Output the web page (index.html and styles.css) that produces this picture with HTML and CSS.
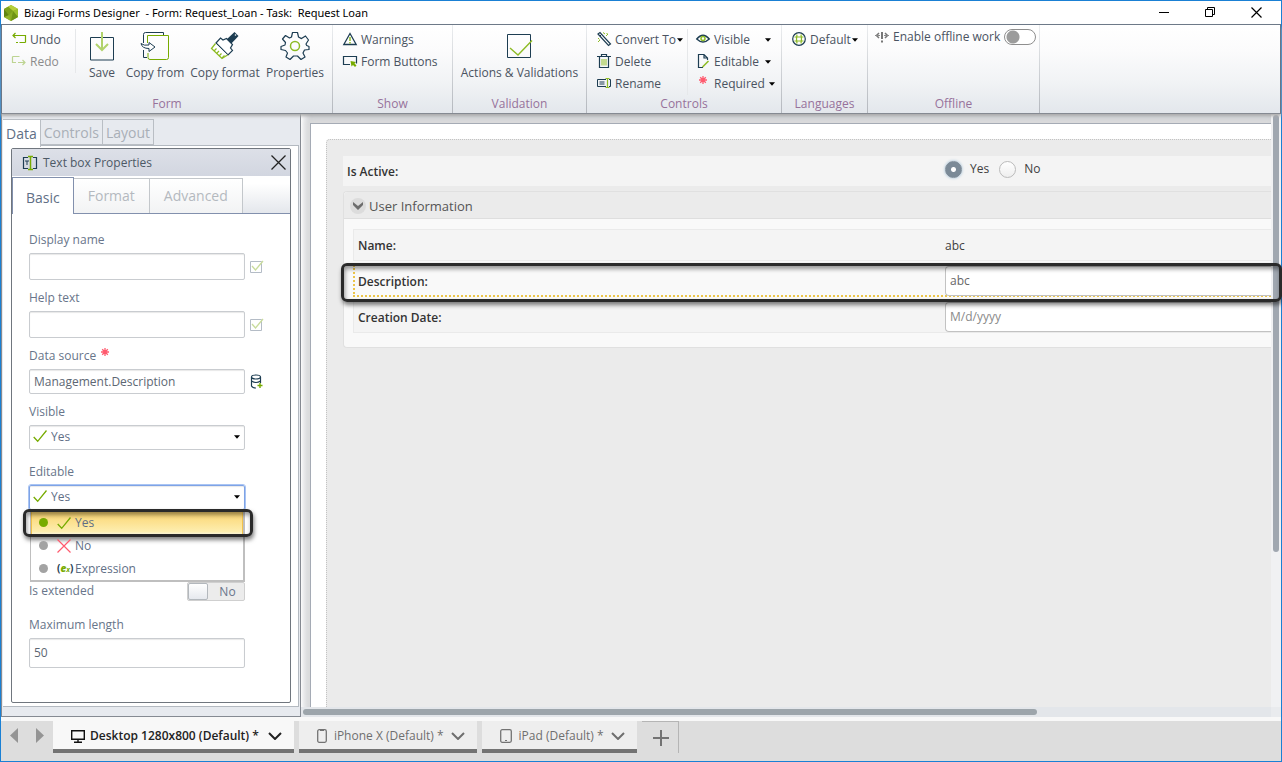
FILE: index.html
```html
<!DOCTYPE html>
<html lang="en">
<head>
<meta charset="utf-8">
<title>Bizagi Forms Designer</title>
<link rel="stylesheet" href="styles.css">
</head>
<body>
<svg class="defs" width="0" height="0" aria-hidden="true">
  <symbol id="check" viewBox="0 0 14 14"><path d="M.7 8l4 4.300L13.500 1.500" fill="none" stroke="#77ab00" stroke-width="1.300"/></symbol>
  <symbol id="caret" viewBox="0 0 7 4"><path d="M0 0h7L3.500 4z" fill="#000"/></symbol>
  <symbol id="chev" viewBox="0 0 14 8"><path d="M1 1l6 6 6-6" fill="none" stroke="currentColor" stroke-width="2"/></symbol>
  <symbol id="star" viewBox="0 0 8 8"><path d="M4 0v8M0 4h8M1.200 1.200l5.600 5.600M6.800 1.200L1.200 6.800" stroke="#ff5a6e" stroke-width="1.300"/></symbol>
  <symbol id="boxcheck" viewBox="0 0 14 13"><path d="M.5 1.500h11v11H.5z" fill="#fff" stroke="#b4bcc6"/><path d="M2 6l3.500 4L13 1" fill="none" stroke="#c9dc9c" stroke-width="1.300"/></symbol>
</svg>
<div class="window">
  <header class="titlebar">
    <svg class="logo" width="16" height="16" viewBox="0 0 16 16"><path d="M8 0l7 4v8l-7 4-7-4V4z" fill="#8aae22"/><path d="M8 0l7 4-5 2-5-4.300z" fill="#b6cf3a"/><path d="M15 4v8l-5-6z" fill="#9cbf2b"/><path d="M15 12l-7 4 2-10z" fill="#6f9414"/><path d="M8 16l-7-4 5-2z" fill="#93b52b"/><path d="M1 12V4l5 6z" fill="#5f8412"/><path d="M1 4l4-2.300L10 6l-4 4z" fill="#7da11b"/></svg>
    <h1 class="title">Bizagi Forms Designer&nbsp; - Form: Request_Loan - Task:&nbsp; Request Loan</h1>
    <div class="wincontrols">
      <button aria-label="Minimize"><svg width="11" height="11"><path d="M0 5.500h10" stroke="#000"/></svg></button>
      <button aria-label="Restore"><svg width="11" height="11"><path d="M.5 2.500h7v7h-7zM2.500 2.500v-2h7v7h-2" fill="none" stroke="#000"/></svg></button>
      <button aria-label="Close"><svg width="11" height="11"><path d="M.5.5l10 10M10.500.5l-10 10" stroke="#000" stroke-width="1.200"/></svg></button>
    </div>
  </header>

  <nav class="ribbon">
    <section class="group g-form">
      <div class="tools">
        <div class="smallcol divided">
          <button class="small"><svg width="14" height="14"><path d="M3.500 1L1 3.500 3.500 6M1 3.500h12.500v7" fill="none" stroke="#77ab00" stroke-width="1.200"/><path d="M4 10.500h2M7.500 10.500h6" stroke="#77ab00"/></svg>Undo</button>
          <button class="small off"><svg width="14" height="14"><path d="M10.500 6L13 8.500 10.500 11M13 8.500H6M.5 9V2.500M1 8.500h3M.5 2.500h7" fill="none" stroke="#bdd492" stroke-width="1.200"/></svg>Redo</button>
        </div>
        <button class="big narrow"><svg width="26" height="30"><path d="M1.500 6.500h23v22.500h-23z" fill="none" stroke="#1d3d52"/><path d="M13 1v17M7 13l6 6 6-6" fill="none" stroke="#b1d36c" stroke-width="2"/></svg>Save</button>
        <button class="big"><svg width="30" height="30"><path d="M3.500 12V3.500q0-2 2-2h18V4M3.500 19v7.500H7" fill="none" stroke="#1d3d52"/><path d="M11 4.500h17.500v22q0 2-2 2H10q-2 0-2-2V22M7.500 12V4.500H12" fill="none" stroke="#77ab00"/><path d="M1 12.500q1 5 8 5v3l6-4.500-6-4.500v2.500q-5 1-8-1.500z" fill="#fff" stroke="#1d3d52"/></svg>Copy from</button>
        <button class="big"><svg width="30" height="30"><path d="M24.500 1l4 4-8.500 9-4.500-4.500z" fill="#1d3d52"/><circle cx="25.500" cy="4" r=".8" fill="#fff"/><path d="M6 12l4.500-5 2.500 2 3.500-1.500 6 6-2 3.500 2 2.500-4.500 4.500z" fill="#fff" stroke="#1d3d52" stroke-width="1.200"/><path d="M5.500 12.500L1.500 17.500l10.500 10L17.500 24" fill="#fff" stroke="#8dbb25" stroke-width="1.300"/><path d="M4 20l2.500-2.500M6.500 22.500L9 20M9 25l2.500-2.500M12 27l2.500-2.500" stroke="#8dbb25" stroke-width="1.200"/></svg>Copy format</button>
        <button class="big"><svg width="30" height="30"><path d="M11.500 6l1-4.500h5L18.500 6l3 1.600 4-2.600 3 4-2.500 4 .7 1.500 2.300 1v3l-4.500.5-1.500 3 2 4-4 2.500-3.500-3.500h-4L10 28.500l-4-2.500 1.500-4-2-2.500L1 18.500v-3l4-1.500.5-2.500L2.500 8l3-3.500 4 2.500z" fill="none" stroke="#1d3d52" stroke-width="1.200" stroke-linejoin="round"/><circle cx="15" cy="15" r="4.500" fill="none" stroke="#8dbb25" stroke-width="1.500"/></svg>Properties</button>
      </div>
      <h2>Form</h2>
    </section>
    <section class="group g-show">
      <div class="tools"><div class="smallcol">
        <button class="small"><svg width="14" height="14"><path d="M7 1.500L13.200 12.500H.8z" fill="none" stroke="#1d3d52" stroke-width="1.300"/><path d="M7 5v4M7 10v1.500" stroke="#8dbb25" stroke-width="1.500"/></svg>Warnings</button>
        <button class="small"><svg width="14" height="14"><path d="M7 10.500H.5v-8h13v7" fill="none" stroke="#1d3d52" stroke-width="1.200"/><path d="M7.500 7l5.500 1-1.500 1.500 2 2-1.500 1.500-2-2L8.500 12.500z" fill="#77ab00"/></svg>Form Buttons</button>
      </div></div>
      <h2>Show</h2>
    </section>
    <section class="group g-valid">
      <div class="tools">
        <button class="big wider"><svg width="26" height="30"><path d="M1.500 3.500h23v23h-23z" fill="none" stroke="#1d3d52"/><path d="M4 17l8 7L26 9.500" fill="none" stroke="#8dbb25" stroke-width="1.400"/></svg>Actions &amp; Validations</button>
      </div>
      <h2>Validation</h2>
    </section>
    <section class="group g-ctrl">
      <div class="tools">
        <div class="smallcol divided">
          <button class="small"><svg width="14" height="14"><path d="M1 2l2-1.500L13.500 12l-2 1.500z" fill="none" stroke="#1d3d52" stroke-width="1.200"/><path d="M3 4l2-2" stroke="#1d3d52"/><path d="M1 6l1.500 1.500M6 .5L8 2M9 4l2-2M1 10l2-2M10 1v1" stroke="#8dbb25"/></svg>Convert To<svg class="caret" width="6" height="4"><use href="#caret"/></svg></button>
          <button class="small"><svg width="14" height="14"><path d="M0 2.500h14M4.500 2.500v-2h5v2M2.500 3v10.500h9V3" fill="none" stroke="#1d3d52" stroke-width="1.200"/><path d="M5 5v6.500M7 5v6.500M9 5v6.500" stroke="#8dbb25"/></svg>Delete</button>
          <button class="small"><svg width="14" height="14"><path d="M9 10.500H.5v-7H9M12 3.500h1.500v7H12M2.500 6h5M2.500 8h5" fill="none" stroke="#1d3d52"/><path d="M8.500 2.500h4M10.500 2.500v9M8.500 11.500h4" stroke="#8dbb25" stroke-width="1.200"/></svg>Rename</button>
        </div>
        <div class="smallcol wide">
          <button class="small"><svg width="14" height="14"><path d="M.7 7Q7-.5 13.300 7 7 13 .7 7z" fill="none" stroke="#1d3d52" stroke-width="1.300"/><circle cx="7" cy="6.500" r="2" fill="none" stroke="#8dbb25" stroke-width="1.500"/></svg>Visible<svg class="caret" width="6" height="4"><use href="#caret"/></svg></button>
          <button class="small"><svg width="14" height="14"><path d="M7 13.500H2.500V.5H8L11.500 4v2M8 .5V4h3.500" fill="none" stroke="#1d3d52" stroke-width="1.200"/><path d="M6.500 13l6-6" stroke="#8dbb25" stroke-width="1.600"/></svg>Editable<svg class="caret" width="6" height="4"><use href="#caret"/></svg></button>
          <button class="small"><svg width="14" height="14"><use href="#star" x="3" y="0" width="8" height="8"/></svg>Required<svg class="caret" width="6" height="4"><use href="#caret"/></svg></button>
        </div>
      </div>
      <h2>Controls</h2>
    </section>
    <section class="group g-lang">
      <div class="tools"><div class="smallcol">
        <button class="small"><svg width="14" height="14"><circle cx="7" cy="7" r="6.300" fill="none" stroke="#1d3d52" stroke-width="1.200"/><path d="M5 2.500q-1 4.500 0 9M9 2.500q1 4.500 0 9M2.500 5h9M2.500 9h9" fill="none" stroke="#8dbb25" stroke-width="1.200"/></svg>Default<svg class="caret" width="6" height="4"><use href="#caret"/></svg></button>
      </div></div>
      <h2>Languages</h2>
    </section>
    <section class="group g-off">
      <div class="tools">
        <label class="offline"><svg width="14" height="14"><path d="M7 2v7M7 10.500v2" stroke="#777" stroke-width="2"/><path d="M4 3L1.500 5.500 4 8M10 3l2.500 2.500L10 8" stroke="#777" fill="none" stroke-width="1.500"/><path d="M0 5.500h5M9 5.500h5" stroke="#8a8a8a"/></svg>Enable offline work<input type="checkbox" class="switch"></label>
      </div>
      <h2>Offline</h2>
    </section>
  </nav>

  <main class="workspace">
    <aside class="sidebar">
      <div class="sidetabs" role="tablist">
        <button class="active" role="tab">Data</button><button role="tab">Controls</button><button role="tab">Layout</button>
      </div>
      <div class="sidebody">
        <section class="props">
          <header class="propshead">
            <svg width="14" height="14"><path d="M5 1.500H.5v11H5M10 1.500h3.500v11H10" fill="none" stroke="#1d3d52" stroke-width="1.200"/><path d="M5 .5h5M7.500 .5v13M5 13.500h5" stroke="#77ab00" stroke-width="1.500"/><path d="M2 5h4M4 5v4" stroke="#1d3d52"/></svg>
            <h2>Text box Properties</h2>
            <button aria-label="Close properties"><svg width="15" height="15"><path d="M.5.5l14 14M14.500.5l-14 14" stroke="#222" stroke-width="1.300"/></svg></button>
          </header>
          <div class="proptabs" role="tablist">
            <button class="active" role="tab">Basic</button><button role="tab">Format</button><button role="tab">Advanced</button>
          </div>
          <form class="fields">
            <div class="field"><label for="dn">Display name</label><div class="line"><input id="dn" class="box mid" type="text"><svg width="14" height="13"><use href="#boxcheck"/></svg></div></div>
            <div class="field"><label for="ht">Help text</label><div class="line"><input id="ht" class="box mid" type="text"><svg width="14" height="13"><use href="#boxcheck"/></svg></div></div>
            <div class="field"><label for="ds">Data source <svg class="req" width="8" height="8"><use href="#star"/></svg></label><div class="line"><input id="ds" class="box" type="text" value="Management.Description"><svg width="14" height="15"><ellipse cx="6" cy="3" rx="4.500" ry="2" fill="none" stroke="#1d3d52" stroke-width="1.200"/><path d="M1.500 3v9q1 2 4.500 2M10.500 3v6M1.500 7q4.500 3 9 0" fill="none" stroke="#1d3d52" stroke-width="1.200"/><path d="M7.500 11.500h5M10 9v5" stroke="#77ab00" stroke-width="1.400"/></svg></div></div>
            <div class="field"><label for="vi">Visible</label><div class="pick"><svg class="mark" width="14" height="14"><use href="#check"/></svg><select id="vi" class="box"><option>Yes</option></select><svg class="arrow" width="6" height="4"><use href="#caret"/></svg></div></div>
            <div class="field editable"><label for="ed">Editable</label><div class="pick open"><svg class="mark" width="14" height="14"><use href="#check"/></svg><select id="ed" class="box"><option>Yes</option></select><svg class="arrow" width="6" height="4"><use href="#caret"/></svg>
              <ul class="menu" role="listbox" aria-label="Editable">
                <li class="chosen" role="option" aria-selected="true"><i class="dot"></i><svg width="14" height="14"><use href="#check"/></svg>Yes<span class="callout"></span></li>
                <li role="option"><i class="dot"></i><svg width="14" height="14"><path d="M.5.5l13 13M13.500.5l-13 13" stroke="#ff5a6e" stroke-width="1.200"/></svg>No</li>
                <li role="option"><i class="dot"></i><span class="ex">(<b>e</b><small>x</small>)</span>Expression</li>
              </ul></div></div>
            <div class="extended"><label for="ie">Is extended</label><span class="toggle"><input id="ie" type="checkbox"><span>No</span></span></div>
            <div class="field"><label for="ml">Maximum length</label><input id="ml" class="box tall" type="text" value="50"></div>
          </form>
        </section>
      </div>
    </aside>

    <section class="canvas">
      <div class="viewport">
        <div class="page">
          <div class="form">
            <div class="row active-row"><span class="name">Is Active:</span>
              <span class="radios"><label><input type="radio" name="active" checked>Yes</label><label><input type="radio" name="active">No</label></span></div>
            <section class="box-group">
              <h3><button aria-label="Collapse"><svg width="12" height="8"><path d="M1 0l5 4 5-4v3L6 8 1 3z" fill="#6d6d6d"/></svg></button>User Information</h3>
              <div class="rows">
                <div class="row"><span class="name">Name:</span><span class="value">abc</span></div>
                <div class="row selected"><label class="name" for="desc">Description:</label><input id="desc" type="text" value="abc"></div>
                <div class="row"><label class="name" for="cd">Creation Date:</label><input id="cd" type="text" placeholder="M/d/yyyy"></div>
              </div>
            </section>
          </div>
        </div>
      </div>
      <div class="vscroll"><i></i></div>
      <div class="hscroll"><i></i></div>
      <div class="callout wide-callout"></div>
    </section>
  </main>

  <footer class="devices">
    <div class="arrows">
      <button aria-label="Previous"><svg width="8" height="15"><path d="M8 0v15L0 7.500z" fill="#949494"/></svg></button>
      <button aria-label="Next"><svg width="8" height="15"><path d="M0 0v15l8-7.500z" fill="#949494"/></svg></button>
    </div>
    <button class="device current"><svg width="14" height="13"><path d="M.7.7h12.600v8.600H.7zM3 12.200h8M7 9.500v2" fill="none" stroke="#111" stroke-width="1.400"/></svg><span>Desktop 1280x800 (Default) *</span><svg width="14" height="8"><use href="#chev"/></svg></button>
    <button class="device"><svg width="10" height="14"><rect x=".7" y=".7" width="8.600" height="12.600" rx="1.500" fill="none" stroke="#737373" stroke-width="1.300"/><path d="M3 1.500h4" stroke="#737373"/></svg><span>iPhone X (Default) *</span><svg width="14" height="8"><use href="#chev"/></svg></button>
    <button class="device"><svg width="12" height="14"><rect x=".7" y=".7" width="10.600" height="12.600" rx="1.500" fill="none" stroke="#737373" stroke-width="1.300"/><path d="M5 11.500h2" stroke="#737373"/></svg><span>iPad (Default) *</span><svg width="14" height="8"><use href="#chev"/></svg></button>
    <button class="add" aria-label="Add device"><svg width="16" height="16"><path d="M8 0v16M0 8h16" stroke="#737373" stroke-width="2"/></svg></button>
  </footer>
</div>
</body>
</html>
```
FILE: styles.css
```css
* { box-sizing: border-box; }
body { margin: 0; font: 12px/18px "Open Sans", "Noto Sans", sans-serif; color: #4a5361; }
h1, h2, h3, ul { margin: 0; padding: 0; font-size: inherit; font-weight: normal; list-style: none; }
button { font: inherit; color: inherit; background: none; border: 0; padding: 0; }
input, select { font: inherit; color: inherit; margin: 0; }
svg { flex: none; display: block; overflow: visible; }
.defs { position: absolute; }
.window { height: 100vh; display: flex; flex-direction: column; border: 1px solid #1a80d4; background: #f8f8f8; }

.titlebar { display: flex; align-items: center; height: 24px; flex: none; padding: 0 19px 0 2px; background: #fff; border-bottom: 1px solid #6a7686; }
.title { margin-left: 5px; color: #000; font-family: "Noto Sans", "Open Sans", sans-serif; font-size: 11px; white-space: pre; }
.wincontrols { margin-left: auto; display: flex; gap: 35px; }

.ribbon { display: flex; flex: none; height: 89px; background: linear-gradient(#fff 0%, #fbfbfc 30%, #f1f3f5 65%, #e3e7ec 100%); border: 1px solid #6a7686; border-top: 0; border-bottom-color: #858a92; box-shadow: 0 2px 3px #aaa; position: relative; z-index: 1; white-space: nowrap; }
.group { display: flex; flex-direction: column; border-right: 1px solid; border-image: linear-gradient(#eceef0, #b3b7bd) 1; }
.group h2 { text-align: center; color: #97729b; line-height: 18px; }
.tools { display: flex; flex: 1; padding-top: 4px; }
.smallcol { display: flex; flex-direction: column; }
.divided { border-right: 1px solid #e6e8ea; }
.small { display: flex; align-items: center; gap: 4px; height: 22px; color: #4a5361; }
.small svg:first-child { margin-top: -3px; }
.off { color: #8b8b8b; }
.big { display: flex; flex-direction: column; align-items: center; width: 70px; padding-top: 2px; gap: 3px; }
.narrow { width: 36px; }
.wider { width: auto; }
.caret { margin-left: -3px; }
.g-form { width: 331px; }
.g-form .divided { width: 64px; height: 44px; margin-right: 8px; }
.g-form .tools, .g-show .tools, .g-ctrl .tools, .g-lang .tools { padding-left: 10px; }
.g-show { width: 120px; }
.g-valid { width: 134px; }
.g-valid .tools { justify-content: center; }
.g-ctrl { width: 195px; }
.g-ctrl .divided { width: 91px; height: 66px; }
.wide { padding-left: 8px; width: 83px; }
.wide .caret { margin-left: auto; }
.g-lang { width: 86px; }
.g-off { width: 172px; }
.g-off .tools { padding: 3px 0 0 7px; align-items: flex-start; }
.offline { display: flex; align-items: center; gap: 4px; }
.switch { appearance: none; width: 32px; height: 16px; border: 1px solid #8e8e8e; border-radius: 8px; background: radial-gradient(circle at 8px 7px, #9c9c9c 6px, transparent 7px) #fff; }

.workspace { flex: 1; min-height: 0; display: flex; }
.sidebar { width: 300px; flex: none; padding: 5px 1px 9px; background: #e7eaef; border: 1px solid #858a92; border-top: 0; display: flex; flex-direction: column; }
.sidetabs { display: flex; }
.sidetabs button { height: 26px; border: 1px solid #b9bec4; border-left: 0; padding: 0 3px; font-size: 14px; line-height: 26px; color: #a9afb7; }
.sidetabs .active { background: #fff; color: #5f6f86; height: 28px; margin-bottom: -2px; border-bottom: 0; z-index: 1; }
.sidebody { flex: 1; background: #fff; border: 1px solid #b3b9c0; border-left: 0; padding: 2px 7px 3px 8px; display: flex; }
.props { flex: 1; border: 1px solid #70767e; border-radius: 2px; display: flex; flex-direction: column; }
.propshead { display: flex; align-items: center; gap: 6px; height: 27px; padding: 0 4px 0 11px; background: linear-gradient(#dde0e8, #d2d6e0); color: #4d5966; }
.propshead button { margin-left: auto; }
.proptabs { display: flex; align-items: flex-end; height: 38px; border-bottom: 1px solid #8290ad; background: linear-gradient(#fff 20%, #e4e7ec); }
.proptabs button { height: 35px; padding: 0 14px; border: 1px solid #c3c7cb; border-left: 0; border-bottom: 0; font-size: 14px; color: #b4b9bf; background: linear-gradient(#fff, #f2f3f4); }
.proptabs .active { height: 37px; margin-bottom: -1px; padding: 4px 13px 0; border: 1px solid #8290ad; border-bottom: 0; color: #5f6f86; background: #fff; }
.fields { padding: 17px; color: #68758a; }
.field { margin-bottom: 9px; }
.field > label { display: block; margin-bottom: 4px; }
.field .req { display: inline-block; margin: 0 0 4px 2px; }
.line { display: flex; align-items: center; gap: 5px; }
.box { display: block; width: 216px; height: 25px; padding: 0 4px 1px; border: 1px solid #c9ccd0; border-radius: 2px; background: #fff; color: #5d6773; box-shadow: inset 0 1px 1px #e8e8e8; }
.mid { height: 27px; }
.tall { height: 30px; }
.pick { position: relative; width: 216px; margin-bottom: 13px; }
select.box { appearance: none; padding: 0 4px 2px 21px; color: #5f6f86; }
.mark { position: absolute; left: 4px; top: 4px; }
.arrow { position: absolute; right: 5px; top: 10px; }
.open select { border: 1px solid #7ea3e6; outline: 1px solid #a9c4f3; }
.menu { position: absolute; left: 1px; right: 0; top: 24px; padding-top: 1px; border: 1px solid #bfbfbf; border-width: 1px 2px 2px 1px; background: #fff; z-index: 2; }
.menu li { position: relative; display: flex; align-items: center; height: 23px; padding-left: 8px; color: #5f6f86; }
.menu svg { margin: 0 4px 0 9px; }
.menu .chosen { padding-left: 7px; background: linear-gradient(#fbd36c, #fdeeb0 90%, #fff9dc); border: 1px solid #f2c24c; border-width: 0 1px; }
.dot { width: 9px; height: 9px; border-radius: 50%; background: #a3a3a3; }
.chosen .dot { background: #77ab00; }
.ex { margin: 0 3px 0 9px; width: 15px; color: #1d3d52; font-size: 10px; font-weight: bold; white-space: nowrap; }
.ex b, .ex small { color: #77ab00; font-style: italic; font-size: 10px; }
.ex small { font-size: 7px; }
.callout { position: absolute; border: 3px solid #2a2a2a; border-radius: 6px; box-shadow: 1px 3px 4px rgba(0,0,0,.5), inset 1px 3px 4px rgba(0,0,0,.4); pointer-events: none; }
.chosen .callout { inset: -2px -11px -3px -9px; }
.editable { margin-bottom: 72px; }
.editable .pick { margin: 0; }
.extended { display: flex; justify-content: space-between; width: 216px; margin-bottom: 15px; height: 19px; }
.toggle { display: flex; align-items: stretch; width: 58px; background: #ececec; border: 1px solid #cfcfcf; border-radius: 2px; line-height: 17px; }
.toggle input { appearance: none; width: 20px; border: 1px solid #b3b8bd; border-radius: 2px; background: linear-gradient(#fff, #e6e9ee); }
.toggle span { flex: 1; text-align: center; padding-left: 3px; }

.canvas { position: relative; flex: 1; min-width: 0; display: grid; grid-template: 1fr 10px / 1fr 10px; background: #e9ebee; }
.viewport { overflow: hidden; min-height: 0; padding: 9px 0 0 9px; background: linear-gradient(90deg, #fff, #c9cdd3 10px); }
.page { height: 100%; padding: 15px 0 0 15px; background: #fff; border: 1px solid #a5abb5; border-width: 1px 0 0 1px; box-shadow: 0 -1px 8px 4px #ddd; }
.form { height: 100%; padding: 16px 0 0 16px; background: #ebebeb; border: 1px dotted #c3c3c3; border-width: 1px 0 0 1px; border-radius: 4px 0 0 0; }
.row { display: grid; grid-template-columns: 591px 1fr; align-items: center; height: 32px; background: #f4f4f4; border: 1px solid #eaeaea; border-right: 0; color: #404040; }
.row .name { padding-left: 4px; font-weight: 600; color: #333; }
.row .name, .value { padding-top: 2px; }
.active-row { grid-template-columns: 602px 1fr; height: 30px; border: 0; margin-bottom: 5px; }
.radios { display: flex; gap: 10px; margin-top: -4px; }
.radios label { display: flex; align-items: center; gap: 8px; }
.radios input { appearance: none; width: 17px; height: 17px; border-radius: 50%; border: 1px solid #bbb; background: linear-gradient(#fff, #eee); }
.radios input:checked { border-color: #7b8a97; background: radial-gradient(circle, #fff 2px, #7b8a97 3px); box-shadow: 0 0 3px #8fb4cf; }
.box-group { border: 1px solid #e0e0e0; border-right: 0; border-radius: 4px 0 0 4px; background: #f9f9f9; }
.box-group h3 { display: flex; align-items: center; gap: 3px; height: 27px; padding: 2px 6px 0; border-bottom: 1px solid #dedede; background: #ebebeb; font-size: 13px; color: #555; border-radius: 4px 0 0 0; }
.box-group h3 button { width: 16px; height: 16px; padding: 0 2px; border-radius: 50%; background: #dcdcdc; }
.rows { display: grid; gap: 4px; padding: 10px 0 14px 9px; }
.rows input { height: 30px; width: 100%; border: 1px solid #c2c2c2; border-right: 0; border-radius: 4px 0 0 4px; padding: 0 4px 1px; color: #666; background: #fff; }
.rows input::placeholder { color: #8a8a8a; }
.selected { grid-template-columns: 590px 1fr; background: #f9f9f9; border-color: #f9f9f9; border-left: 2px dotted #ecc54a; border-bottom: 2px dotted #ecc54a; }
.selected .name { padding-left: 3px; }
.vscroll { background: #f0f1f3; padding: 1px 2px; }
.vscroll i { display: block; height: 74%; border-radius: 4px; background: #a0a7b0; }
.hscroll { background: #e3e6ea; padding: 2px; }
.hscroll i { display: block; width: 76%; height: 6px; border-radius: 3px; background: #9da5ab; }
.wide-callout { left: 40px; right: -1px; top: 149px; height: 39px; z-index: 2; }

.devices { display: flex; gap: 5px; flex: none; height: 44px; padding-bottom: 8px; background: #ddd; border-top: 4px solid #f8f8f8; color: #6e6e6e; }
.arrows { display: flex; gap: 18px; width: 47px; padding: 0 0 4px 9px; align-items: center; }
.device { display: flex; align-items: center; gap: 7px; padding: 2px 12px 0 18px; background: #eee; border-bottom: 4px solid #737373; white-space: nowrap; }
.current { gap: 5px; background: #f8f8f8; color: #222; font-weight: 600; }
.current span { margin-right: 4px; }
.add { width: 37px; border: 1px solid #b5b5b5; border-width: 1px 1px 0 0; padding-left: 11px; }
```
